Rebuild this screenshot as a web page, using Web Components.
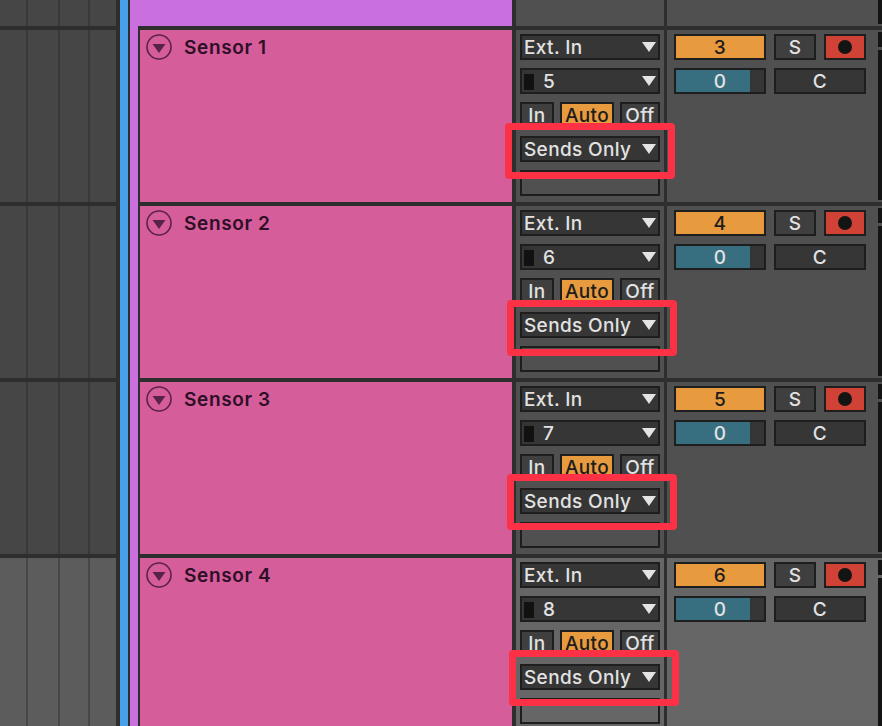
<!DOCTYPE html>
<html><head><meta charset="utf-8"><style>
html,body{margin:0;padding:0;height:726px;overflow:hidden;background:#2e2e2e}
</style></head><body>
<ableton-app></ableton-app>
<script>
const FONT='"Inter","Noto Sans",sans-serif';
class ClipRow extends HTMLElement{
  constructor(){super();this.attachShadow({mode:'open'}).innerHTML=`<style>
  :host{display:flex;gap:2px;background:#393939;--c:#464646}
  :host([light]){--c:#5c5c5c;background:#474747;flex:1}
  i{display:block;background:var(--c)}
  .a{width:26px}.b{width:30px}.c{width:28px}.d{width:26px}
  </style><i class="a"></i><i class="b"></i><i class="c"></i><i class="d"></i>`;}
}
customElements.define('clip-row',ClipRow);
class UiCtl extends HTMLElement{
  constructor(){super();this.attachShadow({mode:'open'}).innerHTML=`<style>
  :host{display:flex;align-items:center;box-sizing:border-box;height:26px;border:2px solid #1e1e1e;padding-top:2px;background:var(--bg,#363636);color:var(--fg,#e2e2e2);font:500 19px/20px ${FONT};letter-spacing:.35px;white-space:nowrap;overflow:hidden}
  </style><slot></slot>`;}
}
customElements.define('ui-ctl',UiCtl);
class UiSelect extends HTMLElement{
  constructor(){super();this.attachShadow({mode:'open'}).innerHTML=`<style>
  :host{display:block}
  ui-ctl{padding-left:2px;justify-content:space-between;padding-right:2px}
  svg{display:block;width:14px;height:10px;flex:none;margin-top:-2px}
  .m{display:none;width:10px;height:18px;background:linear-gradient(#333 0 2px,#111 2px);margin:-2px 9px 0 0}
  :host([meter]) .m{display:block}
  .l{display:flex;align-items:center}
  </style><ui-ctl><span class="l"><span class="m"></span><span><slot></slot></span></span><svg viewBox="0 0 14 10"><path d="M0 0H14L7 10Z" fill="#e4e4e4"/></svg></ui-ctl>`;}
}
customElements.define('ui-select',UiSelect);
class MixerStrip extends HTMLElement{
  constructor(){super();const ch=this.getAttribute('ch');this.attachShadow({mode:'open'}).innerHTML=`<style>
  :host{display:flex;flex-direction:column;gap:8px;padding:4px 4px 0;box-sizing:border-box}
  .b{display:grid;grid-template-columns:34px 54px 40px;gap:6px;height:26px}
  ui-ctl{justify-content:center;height:26px;--bg:#3f3f3f}
  .a{--bg:#e79a3e;--fg:#1c1c1c}
  .e{--bg:transparent}
  </style>
  <ui-select>Ext. In</ui-select>
  <ui-select meter>${ch}</ui-select>
  <div class="b"><ui-ctl>In</ui-ctl><ui-ctl class="a">Auto</ui-ctl><ui-ctl>Off</ui-ctl></div>
  <ui-select>Sends Only</ui-select>
  <ui-ctl class="e"></ui-ctl>`;}
}
customElements.define('mixer-strip',MixerStrip);
class MixerCtl extends HTMLElement{
  constructor(){super();const n=this.getAttribute('num');this.attachShadow({mode:'open'}).innerHTML=`<style>
  :host{display:grid;grid-template-columns:92px 42px 42px;grid-auto-rows:26px;gap:8px;padding:4px 0 0 7px;box-sizing:border-box;align-content:start}
  ui-ctl{justify-content:center;--bg:#3f3f3f}
  .n{--bg:#e79a3e;--fg:#1c1c1c}
  .r{--bg:#d04236}
  .r i{display:block;width:14px;height:14px;border-radius:50%;background:#141414;margin-top:-2px}
  .v{--bg:linear-gradient(90deg,#376f80 0 74px,#363636 74px)}
  .c{grid-column:2/4;--bg:#363636}
  </style>
  <ui-ctl class="n">${n}</ui-ctl><ui-ctl>S</ui-ctl><ui-ctl class="r"><i></i></ui-ctl>
  <ui-ctl class="v">0</ui-ctl><ui-ctl class="c">C</ui-ctl>`;}
}
customElements.define('mixer-ctl',MixerCtl);
class TrackRow extends HTMLElement{
  constructor(){super();const n=this.getAttribute('name'),ch=this.getAttribute('ch'),num=this.getAttribute('num');this.attachShadow({mode:'open'}).innerHTML=`<style>
  :host{display:grid;grid-template-columns:372px 152px 214px 4px;height:172px;margin-top:4px;--p:#505050;background:#2e2e2e;padding-left:2px;box-sizing:border-box}
  :host([light]){--p:#666;height:168px}
  .t{background:#d55d9a;display:flex;align-items:flex-start;gap:12px;padding:4px 0 0 6px;box-sizing:border-box;color:#2e0f27;font:600 19px/26px ${FONT};letter-spacing:.65px}
  .t span{margin-top:1px}
  svg{width:26px;height:26px;flex:none}
  mixer-strip{background:var(--p);margin-left:4px}
  mixer-ctl{background:var(--p);margin-left:3px}
  .s{background:var(--p);display:flex;flex-direction:column;gap:3px;padding-top:2px;box-sizing:border-box;overflow:hidden}
  .s i{display:block;background:#141414;flex:none}
  .s i:first-child{height:15px}
  .s i:last-child{height:150px}
  :host([light]) .s i:last-child{flex:1}
  </style>
  <div class="t"><svg viewBox="0 0 26 26"><circle cx="13" cy="13" r="12" fill="none" stroke="#5a2248" stroke-width="1.6"/><path d="M6.5 10H19.5L13 19Z" fill="#5a2248"/></svg><span>${n}</span></div>
  <mixer-strip ch="${ch}"></mixer-strip><mixer-ctl num="${num}"></mixer-ctl><div class="s"><i></i><i></i></div>`;}
}
customElements.define('track-row',TrackRow);
class RedBox extends HTMLElement{
  constructor(){super();this.attachShadow({mode:'open'}).innerHTML=`<style>
  :host{position:absolute;box-sizing:border-box;width:170px;height:56px;border:7px solid #fd3146;border-radius:4px}
  </style>`;}
}
customElements.define('red-box',RedBox);
class AbletonApp extends HTMLElement{
  constructor(){super();this.attachShadow({mode:'open'}).innerHTML=`<style>
  :host{display:flex;height:726px;width:882px;overflow:hidden;position:relative;background:#2e2e2e}
  .left{width:116px;display:flex;flex-direction:column;gap:4px;margin-right:4px}
  .left clip-row{height:172px;flex:none}
  .left clip-row:first-child{height:26px}
  .left clip-row[light]{height:168px}
  .blue{width:8px;background:#47a0e9;margin-right:2px}
  .pur{width:8px;background:#c970de}
  .tr{width:744px;display:flex;flex-direction:column}
  .top{display:flex;height:26px;flex:none}
  .top i{display:block}
  .top .a{width:374px;background:#c970de}
  .top .b{width:148px;margin-left:4px;background:#505050}
  .top .c{width:211px;margin-left:3px;background:#505050}
  .top .d{width:4px;background:linear-gradient(#141414 0 24px,#505050 24px)}
  </style>
  <div class="left"><clip-row></clip-row><clip-row></clip-row><clip-row></clip-row><clip-row></clip-row><clip-row light></clip-row></div>
  <div class="blue"></div><div class="pur"></div>
  <div class="tr">
    <div class="top"><i class="a"></i><i class="b"></i><i class="c"></i><i class="d"></i></div>
    <track-row name="Sensor 1" ch="5" num="3"></track-row>
    <track-row name="Sensor 2" ch="6" num="4"></track-row>
    <track-row name="Sensor 3" ch="7" num="5"></track-row>
    <track-row light name="Sensor 4" ch="8" num="6"></track-row>
  </div>
  <red-box style="left:505px;top:123px"></red-box>
  <red-box style="left:507px;top:300px"></red-box>
  <red-box style="left:507px;top:474px"></red-box>
  <red-box style="left:509px;top:650px"></red-box>`;}
}
customElements.define('ableton-app',AbletonApp);
</script>
</body></html>
